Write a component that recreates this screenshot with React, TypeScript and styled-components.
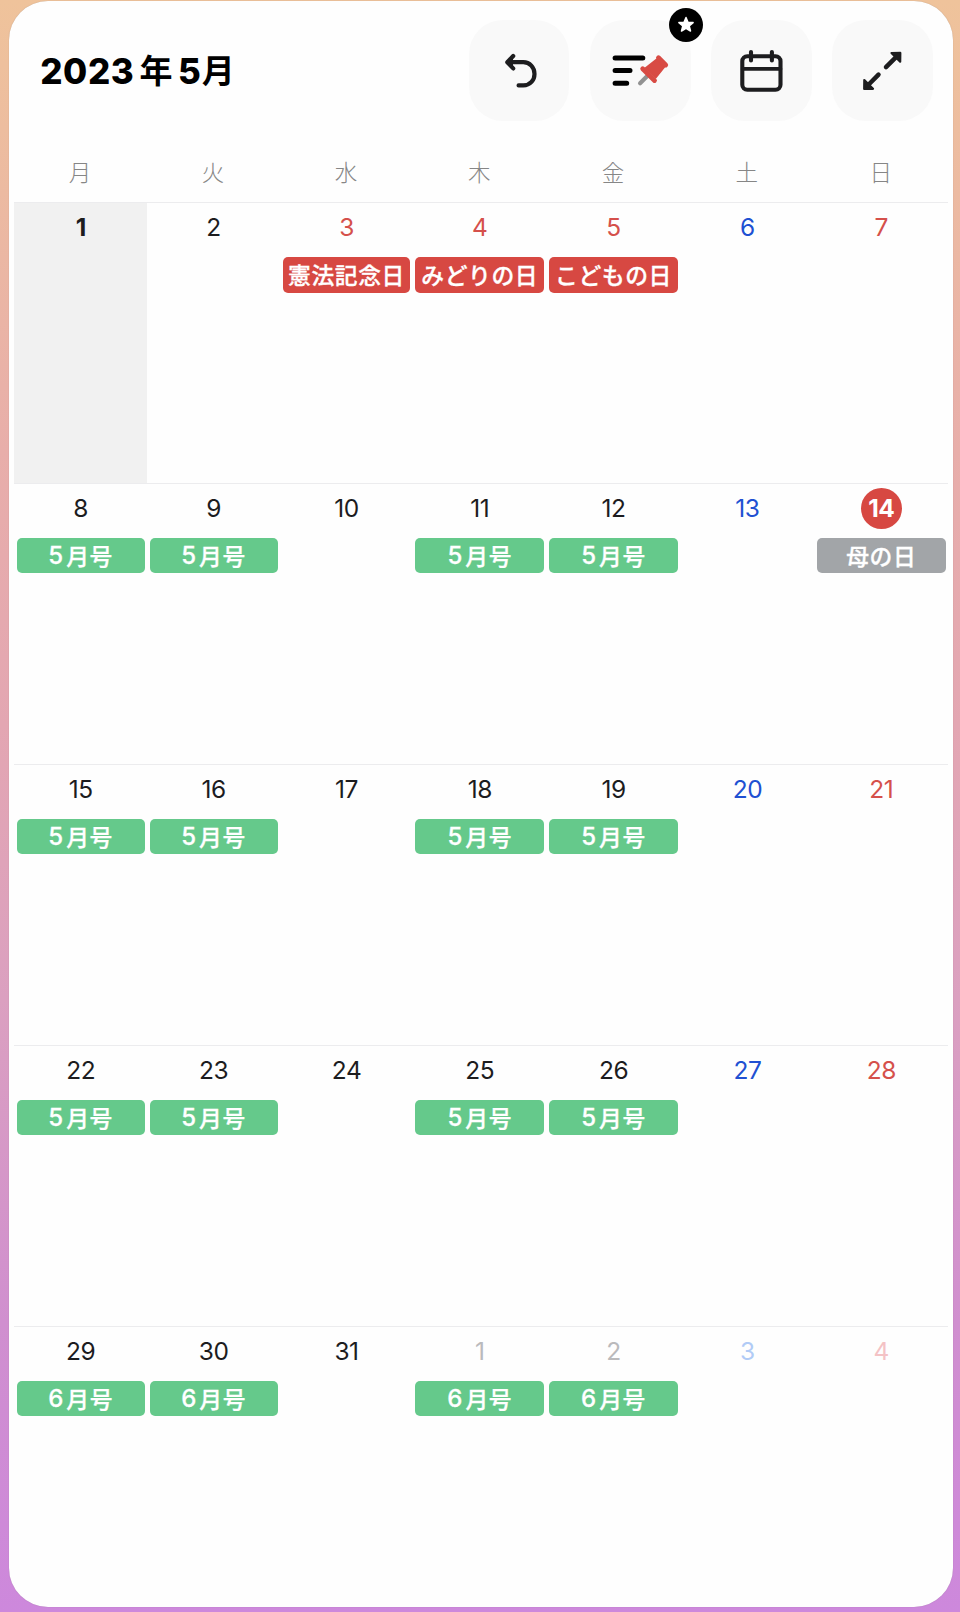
import React from 'react';
import styled, { createGlobalStyle } from 'styled-components';

const GlobalStyle = createGlobalStyle`
  * { box-sizing: border-box; }
  body { margin: 0; }
`;

const Screen = styled.div`
  width: 960px;
  height: 1612px;
  padding: 0.5px 6.8px 5px 9.4px;
  overflow: hidden;
  background: linear-gradient(180deg, #efc39b 0%, #edbd9f 8%, #e8aeaa 28%, #e3a6b2 45%, #dba0c0 62%, #d08fcf 82%, #cd88dc 100%);
  font-family: Inter, 'Noto Sans CJK JP', sans-serif;
`;

const Card = styled.main`
  height: 100%;
  display: flex;
  flex-direction: column;
  border-radius: 39px;
  background: #fefefe;
  box-shadow: 0 0 1px rgba(90, 80, 80, 0.35);
`;

const Header = styled.header`
  flex: none;
  height: 149.5px;
  display: flex;
  align-items: flex-start;
  justify-content: space-between;
  padding: 19.5px 20.2px 0 30.8px;
`;

const Title = styled.h1`
  margin: 0;
  height: 101px;
  display: flex;
  align-items: center;
  color: #000;
  font-size: 35px;
  font-weight: 800;
  line-height: 50px;
  letter-spacing: 0.6px;
`;

const Kanji = styled.span<{ $before?: number; $after?: number }>`
  margin-left: ${({ $before = 0 }) => $before}px;
  margin-right: ${({ $after = 0 }) => $after}px;
  padding-bottom: 3px;
  font-family: 'Noto Sans CJK JP', sans-serif;
  font-size: 33px;
  font-weight: 700;
  letter-spacing: 0;
`;

const Toolbar = styled.nav`
  display: flex;
  gap: 20.6px;
`;

const ToolButton = styled.button`
  position: relative;
  width: 100.6px;
  height: 101px;
  padding: 0;
  border: 0;
  border-radius: 34px;
  background: #f9f9f9;
  display: block;
`;

const ButtonIcon = styled.svg`
  display: block;
  width: 100%;
  height: 100%;
`;

const Badge = styled.span`
  position: absolute;
  top: -12px;
  right: -12.4px;
  width: 34px;
  height: 34px;
  border-radius: 50%;
  background: #000;
`;

const COLUMNS = '132.8px 133px 132.9px 133.6px 133.9px 133.9px 133.8px';

const Weekdays = styled.div`
  flex: none;
  height: 52px;
  margin-left: 4.8px;
  display: grid;
  grid-template-columns: ${COLUMNS};
`;

const Weekday = styled.div`
  color: #868686;
  font-family: 'Noto Sans CJK JP', sans-serif;
  font-size: 22.5px;
  font-weight: 300;
  line-height: 42px;
  text-align: center;
  padding-right: 1px;
`;

const Week = styled.section`
  flex: none;
  height: 280.9px;
  margin-left: 4.8px;
  width: 933.9px;
  display: grid;
  grid-template-columns: ${COLUMNS};
  border-top: 1px solid #ececee;
`;

const Day = styled.div<{ $past?: boolean }>`
  background: ${({ $past }) => ($past ? '#f1f1f1' : 'transparent')};
  display: flex;
  flex-direction: column;
  align-items: center;
  padding: 4.2px 2.4px 0 2.6px;
`;

const DayNumber = styled.div<{ $color: string; $bold?: boolean; $selected?: boolean }>`
  flex: none;
  width: 40.8px;
  height: 40.8px;
  border-radius: 50%;
  background: ${({ $selected }) => ($selected ? '#d74842' : 'transparent')};
  color: ${({ $color }) => $color};
  font-size: 24.5px;
  font-weight: ${({ $bold }) => ($bold ? 700 : 400)};
  letter-spacing: -0.5px;
  line-height: 41.5px;
  text-align: center;
`;

const Chip = styled.div<{ $color: string }>`
  align-self: stretch;
  height: 35.2px;
  margin-top: 9.4px;
  border-radius: 5px;
  background: ${({ $color }) => $color};
  color: #fff;
  font-family: 'Noto Sans CJK JP', sans-serif;
  font-size: 22.8px;
  font-weight: 500;
  -webkit-text-stroke: 0.3px #fff;
  line-height: 35px;
  letter-spacing: 0.6px;
  display: flex;
  justify-content: center;
  white-space: nowrap;
`;

const IssueDigit = styled.span`
  margin-right: 3px;
  font-family: Inter, sans-serif;
  font-size: 24px;
  font-weight: 500;
  letter-spacing: 0;
`;

const RED = '#d74842';
const GREEN = '#65c98b';
const GRAY = '#a2a5a8';
const INK = '#1c1c1e';
const BLUE = '#2050d2';

type Entry = { day: number; label?: string; issue?: number; color?: string; bold?: boolean; past?: boolean; selected?: boolean; outside?: boolean };

const weeks: Entry[][] = [
  [
    { day: 1, bold: true, past: true },
    { day: 2 },
    { day: 3, label: '憲法記念日', color: RED },
    { day: 4, label: 'みどりの日', color: RED },
    { day: 5, label: 'こどもの日', color: RED },
    { day: 6 },
    { day: 7 },
  ],
  [
    { day: 8, issue: 5 }, { day: 9, issue: 5 }, { day: 10 }, { day: 11, issue: 5 }, { day: 12, issue: 5 }, { day: 13 },
    { day: 14, label: '母の日', color: GRAY, bold: true, selected: true },
  ],
  [{ day: 15, issue: 5 }, { day: 16, issue: 5 }, { day: 17 }, { day: 18, issue: 5 }, { day: 19, issue: 5 }, { day: 20 }, { day: 21 }],
  [{ day: 22, issue: 5 }, { day: 23, issue: 5 }, { day: 24 }, { day: 25, issue: 5 }, { day: 26, issue: 5 }, { day: 27 }, { day: 28 }],
  [
    { day: 29, issue: 6 }, { day: 30, issue: 6 }, { day: 31 },
    { day: 1, issue: 6, outside: true }, { day: 2, issue: 6, outside: true }, { day: 3, outside: true }, { day: 4, outside: true },
  ],
];

function numberColor(entry: Entry, column: number) {
  if (entry.selected) return '#fff';
  if (column === 5) return entry.outside ? '#b1cbf6' : BLUE;
  if (column === 6) return entry.outside ? '#f4c2c5' : '#d5504b';
  if (entry.outside) return '#bababc';
  return entry.color === RED ? '#d5504b' : INK;
}

const UndoIcon = () => (
  <ButtonIcon viewBox="0 0 100 101" fill="none" stroke="#1d1d1f" strokeWidth="4.2" strokeLinecap="round" strokeLinejoin="round">
    <path d="M49.3 65.4H54C61 65.4 65.2 60 65.2 53.9C65.2 47.5 60.5 42.2 54 42.2H39" />
    <path d="M43.9 36L38 42.2L43.9 48.4" />
    <path d="M43.2 38.5V46L39 42.2Z" fill="#1d1d1f" strokeWidth="1" />
  </ButtonIcon>
);

const PinnedListIcon = () => (
  <ButtonIcon viewBox="0 0 100 101" fill="none">
    <path d="M24.8 38H52.5M24.8 50.6H39.7M24.8 63.2H36.4" stroke="#000" strokeWidth="5" strokeLinecap="round" />
    <path d="M49.8 63.3L58 55.1" stroke="#929292" strokeWidth="4.2" strokeLinecap="round" />
    <path d="M55.5 48L67 39L74.3 46.3L65.5 57.5Z" fill="#d84b44" stroke="#d84b44" strokeWidth="2" strokeLinejoin="round" />
    <path d="M68.2 37.8L75.4 45M52.4 48.7L64.2 60.5" stroke="#d84b44" strokeWidth="4.8" strokeLinecap="round" />
  </ButtonIcon>
);

const CalendarIcon = () => (
  <ButtonIcon viewBox="0 0 100 101" fill="none" stroke="#1d1d1f" strokeWidth="4.1" strokeLinecap="round">
    <rect x="31" y="36.2" width="38.2" height="33.5" rx="5" />
    <path d="M31.3 48.9H69.2" strokeWidth="3.6" />
    <path d="M39.7 32V40.5M60.6 32V40.5" />
  </ButtonIcon>
);

const ExpandIcon = () => (
  <ButtonIcon viewBox="0 0 100 101" fill="#1d1d1f" stroke="#1d1d1f" strokeLinecap="round" strokeLinejoin="round">
    <path d="M53.7 47.2L64 36.9M46.2 54.7L35.9 65" strokeWidth="4.5" />
    <path d="M59.2 33L68 32.9L67.9 41.7ZM32 60.1L31.9 68.9L40.7 68.8Z" strokeWidth="2.2" />
  </ButtonIcon>
);

const StarIcon = () => (
  <ButtonIcon viewBox="0 0 34 34" fill="#fff" stroke="#fff" strokeWidth="1.5" strokeLinejoin="round">
    <path d="M17 9.5L19 14.2L24.1 14.6L20.2 18L21.5 23L17 20.4L12.5 23L13.8 18L9.9 14.6L15 14.2Z" />
  </ButtonIcon>
);

export default function App() {
  return (
    <Screen>
      <GlobalStyle />
      <Card>
        <Header>
          <Title>
            2023<Kanji $before={5} $after={5.5}>年</Kanji>5<Kanji $before={0.5}>月</Kanji>
          </Title>
          <Toolbar>
            <ToolButton aria-label="戻る"><UndoIcon /></ToolButton>
            <ToolButton aria-label="ピン留め">
              <PinnedListIcon />
              <Badge><StarIcon /></Badge>
            </ToolButton>
            <ToolButton aria-label="カレンダー"><CalendarIcon /></ToolButton>
            <ToolButton aria-label="拡大"><ExpandIcon /></ToolButton>
          </Toolbar>
        </Header>
        <Weekdays>
          {['月', '火', '水', '木', '金', '土', '日'].map((name) => <Weekday key={name}>{name}</Weekday>)}
        </Weekdays>
        {weeks.map((week, row) => (
          <Week key={row}>
            {week.map((entry, column) => (
              <Day key={column} $past={entry.past}>
                <DayNumber $color={numberColor(entry, column)} $bold={entry.bold} $selected={entry.selected}>{entry.day}</DayNumber>
                {entry.label && <Chip $color={entry.color ?? GREEN}>{entry.label}</Chip>}
                {entry.issue && <Chip $color={GREEN}><IssueDigit>{entry.issue}</IssueDigit>月号</Chip>}
              </Day>
            ))}
          </Week>
        ))}
      </Card>
    </Screen>
  );
}
